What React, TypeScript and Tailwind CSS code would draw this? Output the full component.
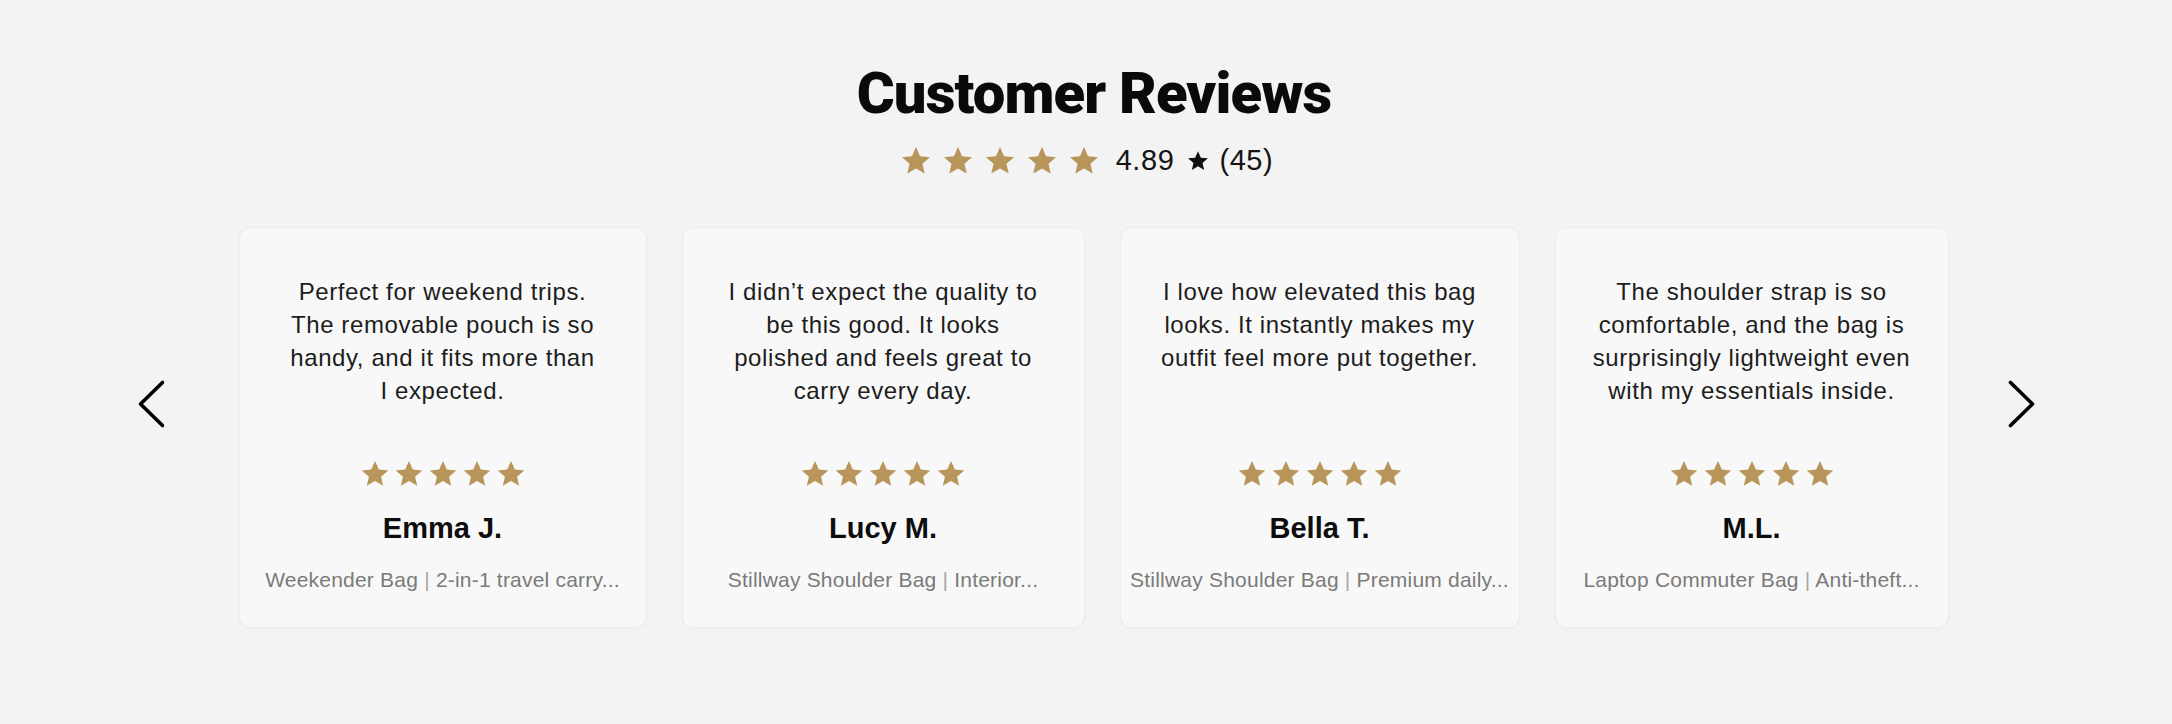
interface Review {
    id: number;
    lines: string[];
    name: string;
    product: string;
    width: string;
}

const reviews: Review[] = [
    {
        id: 1,
        lines: [
            'Perfect for weekend trips.',
            'The removable pouch is so',
            'handy, and it fits more than',
            'I expected.',
        ],
        name: 'Emma J.',
        product: 'Weekender Bag | 2-in-1 travel carry...',
        width: 'w-[408px]',
    },
    {
        id: 2,
        lines: [
            'I didn’t expect the quality to',
            'be this good. It looks',
            'polished and feels great to',
            'carry every day.',
        ],
        name: 'Lucy M.',
        product: 'Stillway Shoulder Bag | Interior...',
        width: 'w-[403px]',
    },
    {
        id: 3,
        lines: [
            'I love how elevated this bag',
            'looks. It instantly makes my',
            'outfit feel more put together.',
        ],
        name: 'Bella T.',
        product: 'Stillway Shoulder Bag | Premium daily...',
        width: 'w-[400px]',
    },
    {
        id: 4,
        lines: [
            'The shoulder strap is so',
            'comfortable, and the bag is',
            'surprisingly lightweight even',
            'with my essentials inside.',
        ],
        name: 'M.L.',
        product: 'Laptop Commuter Bag | Anti-theft...',
        width: 'w-[394px]',
    },
];

function Star({ className }: { className: string }) {
    return (
        <svg viewBox="0 0 24 24" className={className} fill="currentColor">
            <path d="M12 2.2l2.85 6.5 7.05.62-5.35 4.66 1.6 6.92L12 17.25 5.85 20.9l1.6-6.92L2.1 9.32l7.05-.62z" />
        </svg>
    );
}

function Stars({ size, gap }: { size: string; gap: string }) {
    return (
        <div className={`flex items-center text-[#b8955a] ${gap}`}>
            {[0, 1, 2, 3, 4].map((i) => (
                <Star key={i} className={size} />
            ))}
        </div>
    );
}

// Thin carousel chevron, points left or right
function Chevron({ dir }: { dir: 'left' | 'right' }) {
    return (
        <svg
            viewBox="0 0 30 50"
            className="h-[50px] w-[30px]"
            fill="none"
            stroke="currentColor"
            strokeWidth={3.6}
            strokeLinecap="round"
            strokeLinejoin="round"
        >
            {dir === 'left' ? (
                <polyline points="25.5,3.5 3.5,25 25.5,46.5" />
            ) : (
                <polyline points="4.5,3.5 26.5,25 4.5,46.5" />
            )}
        </svg>
    );
}

function ReviewCard({ review }: { review: Review }) {
    const [title, detail] = review.product.split(' | ');

    return (
        <div
            className={`${review.width} flex h-[401px] flex-col items-center rounded-xl border border-[#ececec] bg-[#f8f8f8] px-3 pt-[47px] pb-[34px] shadow-[0_1px_3px_rgba(0,0,0,0.03)]`}
        >
            {/* Review body */}
            <p className="min-h-[132px] text-center text-[24px] leading-[33px] tracking-[0.025em] whitespace-nowrap text-[#1d1d1d]">
                {review.lines.map((line, i) => (
                    <span key={i} className="block">
                        {line}
                    </span>
                ))}
            </p>

            <div className="mt-[51px]">
                <Stars size="h-[32px] w-[32px]" gap="gap-[2px]" />
            </div>

            <h3 className="mt-[21px] text-[29px] leading-[35px] font-bold text-[#0d0d0d]">
                {review.name}
            </h3>

            <p className="mt-[20px] text-[21px] leading-[28px] tracking-[0.01em] whitespace-nowrap text-[#7a7a7a]">
                {title} <span className="text-[#a8a8a8]">|</span> {detail}
            </p>
        </div>
    );
}

export default function App() {
    return (
        <div className="min-h-[724px] w-full bg-[#f3f3f3] pt-[64px] font-['Liberation_Sans',Arial,sans-serif]">
            {/* Heading */}
            <h1 className="pl-[16px] text-center font-['Roboto',sans-serif] text-[58px] leading-[58px] font-black tracking-[-0.015em] text-[#0a0a0a]">
                Customer Reviews
            </h1>

            {/* Overall rating */}
            <div className="mt-[24px] flex h-[29px] items-center justify-center">
                <Stars size="h-[34px] w-[34px]" gap="gap-2" />
                <span className="ml-[15px] text-[29px] leading-none tracking-[0.02em] text-[#151515]">
                    4.89
                </span>
                <Star className="ml-[12px] h-[24px] w-[24px] text-[#111]" />
                <span className="ml-[9px] text-[29px] leading-none tracking-[0.02em] text-[#151515]">
                    (45)
                </span>
            </div>

            {/* Carousel */}
            <div className="mt-[52px] flex items-start justify-center">
                <button className="mt-[153px] mr-[63px] flex h-12 w-12 items-center justify-center text-black">
                    <Chevron dir="left" />
                </button>

                <div className="flex gap-[35px]">
                    {reviews.map((review) => (
                        <ReviewCard key={review.id} review={review} />
                    ))}
                </div>

                <button className="mt-[153px] ml-[48px] flex h-12 w-12 items-center justify-center text-black">
                    <Chevron dir="right" />
                </button>
            </div>
        </div>
    );
}
